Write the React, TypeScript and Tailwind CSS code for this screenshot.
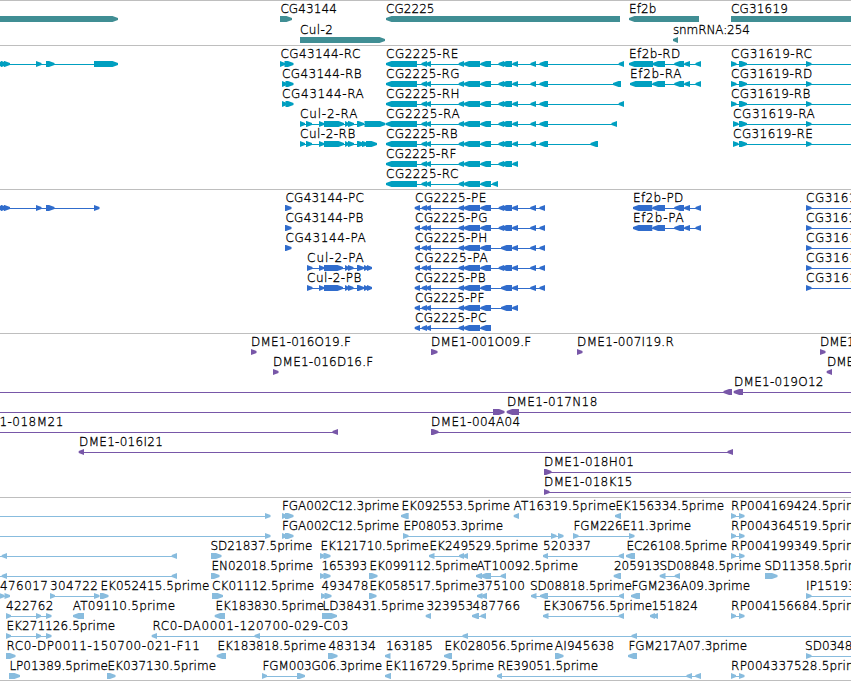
type Strand = "+" | "-";
type Span = [number, number];

interface Feature {
    label?: string;
    // left and right edge of the label
    at?: Span;
    strand: Strand;
    blocks: Span[];
    // the connector reaches this far when the feature leaves the view
    to?: Span;
}

interface TrackData {
    name: string;
    fill: string;
    rowClass: string;
    padClass: string;
    rows: Feature[][];
}

const OFF_LEFT = -20;
const OFF_RIGHT = 900;

const f = (
    label: string,
    at: Span,
    strand: Strand,
    blocks: Span[],
    to?: Span
): Feature => ({ label, at, strand, blocks, to });

const bare = (strand: Strand, blocks: Span[], to?: Span): Feature => ({
    strand,
    blocks,
    to,
});

const genes: Feature[][] = [
    [
        bare("+", [[OFF_LEFT, 118]]),
        f("CG43144", [281, 336], "+", [[280, 292]]),
        f("CG2225", [386.7, 433.7], "-", [[386, 620]]),
        f("Ef2b", [629.7, 655.5], "-", [[629, 699]]),
        f("CG31619", [731.7, 787], "+", [[731, OFF_RIGHT]]),
    ],
    [
        f("Cul-2", [300.7, 332], "+", [[300, 385]]),
        f("snmRNA:254", [673.5, 749], "-", [[673, 678]]),
    ],
];

const cul2: Span[] = [[300, 305], [306, 312], [319, 324], [324, 344], [345, 349], [348, 354], [357, 364]];
const cg2225Short: Span[] = [[386, 417], [421.5, 427], [426, 431], [458.7, 464], [463.5, 480], [480.5, 491]];
const cg2225Mid: Span[] = [...cg2225Short, [498.5, 504], [501, 512], [512.5, 518]];
const cg2225Long: Span[] = [...cg2225Mid, [530.5, 536], [539.5, 548]];
const ef2bTail: Span[] = [[652.5, 665], [674.3, 684], [684.3, 690], [695.5, 701]];
const cg31619: Span[] = [[739, 747], [806, 811.5]];

const transcripts: Feature[][] = [
    [
        bare("+", [[-5, 4], [1, 7], [4, 10], [36, 41.5], [46, 54.5], [94, 118]]),
        f("CG43144-RC", [281, 359.5], "+", [[280, 285], [284.5, 293.5]]),
        f("CG2225-RE", [386.7, 457.5], "-", [...cg2225Long, [618.7, 624]]),
        f("Ef2b-RD", [629.7, 679.5], "-", [[629, 653], ...ef2bTail]),
        f("CG31619-RC", [731.7, 811], "+", [[731, 736.5], ...cg31619], [731, OFF_RIGHT]),
    ],
    [
        f("CG43144-RB", [282.7, 360.7], "+", [[282, 287], [285.5, 293.5]]),
        f("CG2225-RG", [386.7, 458.7], "-", [...cg2225Long, [613, 621]]),
        f("Ef2b-RA", [630.7, 680.7], "-", [[630, 652], ...ef2bTail]),
        f("CG31619-RD", [731.7, 811.5], "+", [[731, 736.5], ...cg31619], [731, OFF_RIGHT]),
    ],
    [
        f("CG43144-RA", [282.7, 363], "+", [[282, 287], [285.5, 293.5]]),
        f("CG2225-RH", [386.7, 458.7], "-", [...cg2225Long, [618.7, 624]]),
        f("CG31619-RB", [731.7, 809.5], "+", [[731, 736.5], ...cg31619], [731, OFF_RIGHT]),
    ],
    [
        f("Cul-2-RA", [300.7, 356.7], "+", [...cul2, [364.5, 385.5]]),
        f("CG2225-RA", [386.7, 459], "-", [...cg2225Long, [611.5, 617]]),
        f("CG31619-RA", [733.7, 814], "+", [[733, 738.5], ...cg31619], [733, OFF_RIGHT]),
    ],
    [
        f("Cul-2-RB", [300.7, 354.5], "+", [...cul2, [362, 368], [366, 377]]),
        f("CG2225-RB", [386.7, 456.7], "-", [...cg2225Long, [590.5, 598]]),
        f("CG31619-RE", [733.7, 812], "+", [[733, 738.5], ...cg31619], [733, OFF_RIGHT]),
    ],
    [f("CG2225-RF", [386.7, 455.5], "-", cg2225Mid)],
    [f("CG2225-RC", [386.7, 457.5], "-", [...cg2225Short, [492.3, 498]])],
];

const cul2Cds: Span[] = [[307, 312.5], [319, 324], [324, 343], [345, 349], [348, 353.5], [357, 364], [364, 368.5], [367, 372]];
const pShort: Span[] = [[414.7, 420], [421.7, 427], [426, 431], [458.7, 464], [463.5, 480], [480.5, 491]];
const pMid: Span[] = [...pShort, [501, 512], [512.3, 518]];
const pLong: Span[] = [...pMid, [530.3, 536], [539.5, 545]];
const pLongSplit: Span[] = [...pLong, [498.7, 504]];
const ef2bCds: Span[] = [[633, 652.3], ...ef2bTail];

const proteins: Feature[][] = [
    [
        bare("+", [[-5, 4], [1, 7], [4, 10], [36, 41.5], [46, 54.5], [94, 99.5]]),
        f("CG43144-PC", [286, 363], "+", [[285, 291.5]]),
        f("CG2225-PE", [415.7, 485.5], "-", pLongSplit),
        f("Ef2b-PD", [633.5, 682.5], "-", ef2bCds),
        f("CG31619-PC", [806.7, 885], "+", [[806, 811.5]], [806, OFF_RIGHT]),
    ],
    [
        f("CG43144-PB", [286, 362.5], "+", [[285, 291.5]]),
        f("CG2225-PG", [415.7, 486.7], "-", pLongSplit),
        f("Ef2b-PA", [633.5, 683], "-", ef2bCds),
        f("CG31619-PD", [806.7, 885], "+", [[806, 811.5]], [806, OFF_RIGHT]),
    ],
    [
        f("CG43144-PA", [286, 365], "+", [[285, 291.5]]),
        f("CG2225-PH", [415.7, 486.5], "-", pLong),
        f("CG31619-PB", [806.7, 885], "+", [[806, 811.5]], [806, OFF_RIGHT]),
    ],
    [
        f("Cul-2-PA", [307.7, 363], "+", cul2Cds),
        f("CG2225-PA", [415.7, 487], "-", pLongSplit),
        f("CG31619-PA", [806.7, 885], "+", [[806, 811.5]], [806, OFF_RIGHT]),
    ],
    [
        f("Cul-2-PB", [307.7, 360.5], "+", cul2Cds),
        f("CG2225-PB", [415.7, 484.7], "-", pLong),
        f("CG31619-PE", [806.7, 885], "+", [[806, 811.5]], [806, OFF_RIGHT]),
    ],
    [f("CG2225-PF", [415.7, 483.5], "-", pMid)],
    [f("CG2225-PC", [415.7, 485.5], "-", pShort)],
];

const bacs: Feature[][] = [
    [
        f("DME1-016O19.F", [251.7, 350], "+", [[251, 256.5]]),
        f("DME1-001O09.F", [431.7, 530.3], "+", [[431, 437.5]]),
        f("DME1-007I19.R", [577.7, 673], "+", [[577, 582.5]]),
        f("DME1-", [820.7, 858], "+", [[820, 825.5]]),
    ],
    [
        f("DME1-016D16.F", [273.7, 372.3], "+", [[273, 278.5]]),
        f("DME1-", [827.7, 865], "-", [[826.7, 832]]),
    ],
    [
        bare("-", [[723.5, 732]], [OFF_LEFT, 732]),
        f("DME1-019O12", [734.7, 822.7], "-", [[733.7, 743]], [734, OFF_RIGHT]),
    ],
    [
        bare("+", [[493, 504.5]], [OFF_LEFT, 504]),
        f("DME1-017N18", [507.5, 596.5], "-", [[506.7, 519]], [507, OFF_RIGHT]),
    ],
    [
        f("1-018M21", [0, 62.5], "-", [[332.5, 338]], [OFF_LEFT, 338]),
        f("DME1-004A04", [431.7, 519.3], "+", [[431, 438.5]], [431, OFF_RIGHT]),
    ],
    [f("DME1-016I21", [79.7, 162], "-", [[78.7, 84], [727.5, 733]])],
    [f("DME1-018H01", [544.7, 633], "+", [[544, 551.5]], [544, OFF_RIGHT])],
    [f("DME1-018K15", [544.7, 631.5], "+", [[544, 549.5]], [544, OFF_RIGHT])],
];

const rp = (label: string) => f(label, [731.7, 864.5], "+", [[731, 736], [739, 744.5]]);
const pairAt6: Span[] = [[6, 11], [36, 41], [46, 51.5]];

const ests: Feature[][] = [
    [
        bare("+", [[265, 270.5]], [OFF_LEFT, 270]),
        f("FGA002C12.3prime", [282.5, 398.3], "+", [[282, 287], [285, 293.5]]),
        f("EK092553.5prime", [402, 509.3], "-", [[401, 408.7]]),
        f("AT16319.5prime", [514, 615], "-", [[513.7, 519]]),
        f("EK156334.5prime", [616, 723.3], "-", [[615, 621]]),
        rp("RP004169424.5prime"),
    ],
    [
        bare("+", [[265, 270.5]], [OFF_LEFT, 270]),
        f("FGA002C12.5prime", [282.5, 398.3], "+", [[282, 287], [285, 293.5]]),
        f("EP08053.3prime", [404, 502.3], "+", [[403, 408.5], [551, 556.5], [558, 563.5]]),
        f("FGM226E11.3prime", [574, 690.3], "+", [[573, 578.5], [629, 634.5]]),
        rp("RP004364519.5prime"),
    ],
    [
        bare("-", [[1.7, 7], [171.7, 177]], [OFF_LEFT, 177]),
        f("SD21837.5prime", [211, 311.5], "+", [[211, 221.5]]),
        f("EK121710.5prime", [321, 428], "+", [[320, 325], [323.5, 330.5]]),
        f("EK249529.5prime", [430, 537.3], "-", [[429, 434.5], [459, 464], [463, 468]]),
        f("520337", [543.7, 590], "-", [[543, 548], [618.7, 624]]),
        f("EC26108.5prime", [627, 726.3], "-", [[626, 635]]),
        rp("RP004199349.5prime"),
    ],
    [
        bare("-", [[1.7, 7], [171.7, 177]], [OFF_LEFT, 177]),
        f("EN02018.5prime", [212, 312.3], "+", [[211, 219.5]]),
        f("165393", [322, 366.3], "+", [[320, 325], [323.5, 330.5]]),
        f("EK099112.5prime", [370, 477], "+", [[369, 377.5]]),
        f("AT10092.5prime", [477, 577.3], "-", [[476, 482], [480.5, 491], [500.7, 506]]),
        f("205913", [614.5, 659], "-", [[613.7, 621]]),
        f("SD08848.5prime", [660, 760.3], "-", [[659.7, 665.5], [674.7, 680]]),
        f("SD11358.5prime", [765, 866], "+", [[765, 777.5]]),
    ],
    [
        f("476017", [0.7, 47], "+", [[-1, 4.5], [4.5, 10]]),
        f("304722", [50.7, 97], "+", [[50, 55], [94, 99.5]]),
        f("EK052415.5prime", [101, 208.5], "+", [[100, 108.5]]),
        f("CK01112.5prime", [212.7, 313.3], "+", [[212, 223]]),
        f("493478", [322, 367.7], "+", [[321, 326], [324.5, 331.5]]),
        f("EK058517.5prime", [370, 477], "+", [[369, 376.5]]),
        f("375100", [478, 524], "-", [[477, 482.5], [481, 487]]),
        f("SD08818.5prime", [530.5, 631], "-", [[531, 536.5], [540, 548], [619, 624]]),
        f("FGM236A09.3prime", [632, 749.3], "-", [[631, 640]]),
        f("IP15193.5prime", [806.7, 902], "+", [[806, 811.5]], [806, OFF_RIGHT]),
    ],
    [
        f("422762", [6.7, 52.5], "+", pairAt6),
        f("AT09110.5prime", [73.3, 174.3], "-", [[73, 84]]),
        f("EK183830.5prime", [216, 323.3], "-", [[214.7, 225]]),
        f("LD38431.5prime", [323, 423.3], "+", [[322, 337]]),
        f("323953", [427, 472.3], "-", [[425.7, 431]]),
        f("487766", [473, 519.3], "-", [[472, 479], [480.5, 486]]),
        f("EK306756.5prime", [544, 651.3], "-", [[543, 548.5], [618.7, 624]]),
        f("151824", [652, 697], "-", [[650, 655], [653, 658]]),
        rp("RP004156684.5prime"),
    ],
    [
        f("EK271126.5prime", [7, 114.3], "+", pairAt6),
        f(
            "RC0-DA0001-120700-029-C03",
            [153, 347.7],
            "-",
            [[151.7, 157], [254.5, 260], [462.5, 468], [631.5, 637]],
            [152, OFF_RIGHT]
        ),
    ],
    [
        f("RC0-DP0011-150700-021-F11", [7, 199], "+", [[6, 15.5]]),
        f("EK183818.5prime", [218, 325.3], "-", [[216.7, 226]]),
        f("483134", [329, 375], "+", [[328, 337.5]]),
        f("163185", [386.5, 432], "-", [[385, 390.5]]),
        f("EK028056.5prime", [445, 552.3], "-", [[444, 452]]),
        f("AI945638", [555.3, 613.3], "+", [[555, 563.5]]),
        f("FGM217A07.3prime", [629, 746.3], "-", [[628, 637]]),
        f("SD0348", [805.7, 851.5], "+", [[806, 811.5]], [806, OFF_RIGHT]),
    ],
    [
        f("LP01389.5prime", [10, 107], "+", [[9, 20]]),
        f("EK037130.5prime", [108, 215.3], "+", [[107, 115.5]]),
        f("FGM003G06.3prime", [263, 381.3], "+", [[262, 267], [297, 305]]),
        f("EK116729.5prime", [386, 493.3], "-", [[385, 391]]),
        f("RE39051.5prime", [498, 597.3], "-", [[497, 502], [686.5, 692], [695.3, 701]]),
        rp("RP004337528.5prime"),
    ],
];

const tracks: TrackData[] = [
    { name: "genes", fill: "fill-[#408e94]", rowClass: "h-[21px]", padClass: "pb-0.5", rows: genes },
    { name: "transcripts", fill: "fill-[#009fc0]", rowClass: "h-5", padClass: "pb-[3px]", rows: transcripts },
    { name: "proteins", fill: "fill-[#306ccc]", rowClass: "h-5", padClass: "pb-[3px]", rows: proteins },
    { name: "bacs", fill: "fill-[#7857a8]", rowClass: "h-5", padClass: "pb-[3px]", rows: bacs },
    { name: "ests", fill: "fill-[#88bcde]", rowClass: "h-5", padClass: "pb-0.5", rows: ests },
];

const HEAD = 5.5;

const arrow = ([a, b]: Span, strand: Strand) => {
    const head = Math.min(HEAD, b - a);
    return strand === "+"
        ? `${a},15 ${b - head},15 ${b},17 ${b},19 ${b - head},21 ${a},21`
        : `${b},15 ${a + head},15 ${a},17 ${a},19 ${a + head},21 ${b},21`;
};

const FeatureGlyph = ({ feature }: { feature: Feature }) => {
    const { label, at, strand, blocks, to } = feature;
    const start = to ? to[0] : Math.min(...blocks.map((b) => b[0]));
    const end = to ? to[1] : Math.max(...blocks.map((b) => b[1]));

    return (
        <g>
            <rect x={start + 1} y={18} width={end - start - 2} height={1} shapeRendering="crispEdges" />
            {blocks.map((block, i) => (
                <polygon key={i} points={arrow(block, strand)} />
            ))}
            {label && at && (
                <text
                    x={at[0] - 0.6}
                    y={12}
                    textLength={at[1] - at[0] + 1.4}
                    className="fill-black stroke-black stroke-[0.3px] text-[12px] font-extralight"
                >
                    {label}
                </text>
            )}
        </g>
    );
};

const Track = ({ track }: { track: TrackData }) => (
    <section className={`flex flex-col border-t border-[#bebebe] ${track.padClass}`}>
        {track.rows.map((row, i) => (
            <svg key={i} className={`block w-full shrink-0 overflow-visible ${track.rowClass} ${track.fill}`}>
                {row.map((feature, j) => (
                    <FeatureGlyph key={j} feature={feature} />
                ))}
            </svg>
        ))}
    </section>
);

const App = () => {
    return (
        <main className="flex h-[681px] w-[851px] flex-col overflow-hidden border-b border-[#bebebe] bg-white font-['DejaVu_Sans',sans-serif]">
            {tracks.map((track) => (
                <Track key={track.name} track={track} />
            ))}
        </main>
    );
};

export default App;
